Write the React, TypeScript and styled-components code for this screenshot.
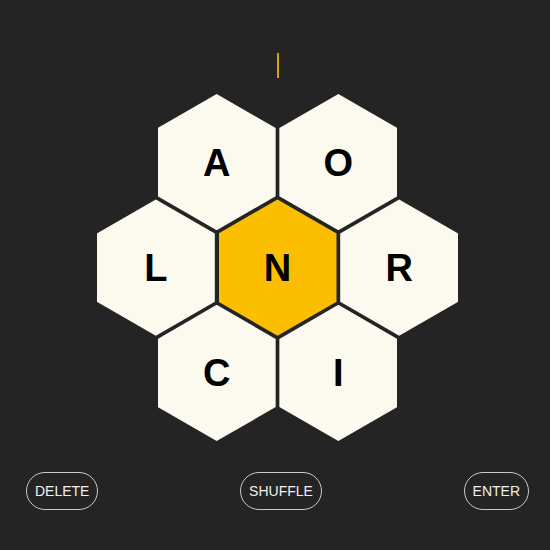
import styled, { createGlobalStyle } from 'styled-components';

const GlobalStyle = createGlobalStyle`
  html, body {
    margin: 0;
    padding: 0;
    background-color: #242424;
  }
  body {
    font-family: 'Liberation Sans', Arial, sans-serif;
  }
`;

const ROWS = [['A', 'O'], ['L', 'N', 'R'], ['C', 'I']];
const CENTER = 'N';

function App() {
  return (
    <Page>
      <GlobalStyle />
      <InputRow>
        <Cursor />
      </InputRow>
      <Hive>
        {ROWS.map((row, i) => (
          <HiveRow key={i}>
            {row.map((letter) => (
              <Cell key={letter} center={letter === CENTER}>
                {letter}
              </Cell>
            ))}
          </HiveRow>
        ))}
      </Hive>
      <Controls>
        <Button>DELETE</Button>
        <Button>SHUFFLE</Button>
        <Button>ENTER</Button>
      </Controls>
    </Page>
  );
}

export default App;

const Page = styled.div`
  display: flex;
  flex-direction: column;
  align-items: center;
  width: 550px;
  height: 550px;
  box-sizing: border-box;
  padding: 53px 21px 0px 26px;
  background-color: #242424;
`;

const InputRow = styled.div`
  display: flex;
  justify-content: center;
  height: 25px;
`;

const Cursor = styled.div`
  width: 2px;
  height: 25px;
  background-color: #dba300;
`;

const Hive = styled.div`
  display: flex;
  flex-direction: column;
  align-items: center;
  margin-top: 16px;
`;

const HiveRow = styled.div`
  display: flex;
  gap: 3.7px;

  & + & {
    margin-top: -30.9px;
  }
`;

const Cell = styled.button<{ center: boolean }>`
  display: flex;
  align-items: center;
  justify-content: center;
  width: 118px;
  height: 136.3px;
  padding: 2px 0px 0px;
  border: none;
  clip-path: polygon(50% 0%, 100% 25%, 100% 75%, 50% 100%, 0% 75%, 0% 25%);
  background-color: ${(props) => (props.center ? '#fbbe00' : '#fcf9ee')};
  color: #000000;
  font-family: 'Liberation Sans', Arial, sans-serif;
  font-size: 38px;
  font-weight: bold;
  cursor: pointer;
`;

const Controls = styled.div`
  display: flex;
  justify-content: space-between;
  align-self: stretch;
  margin-top: 31px;
`;

const Button = styled.button`
  height: 38px;
  padding: 0px 8px;
  border: 1px solid #c9c9c9;
  border-radius: 19px;
  background-color: transparent;
  color: #f0f0f0;
  font-family: 'Liberation Sans', Arial, sans-serif;
  font-size: 14px;
  cursor: pointer;
`;
